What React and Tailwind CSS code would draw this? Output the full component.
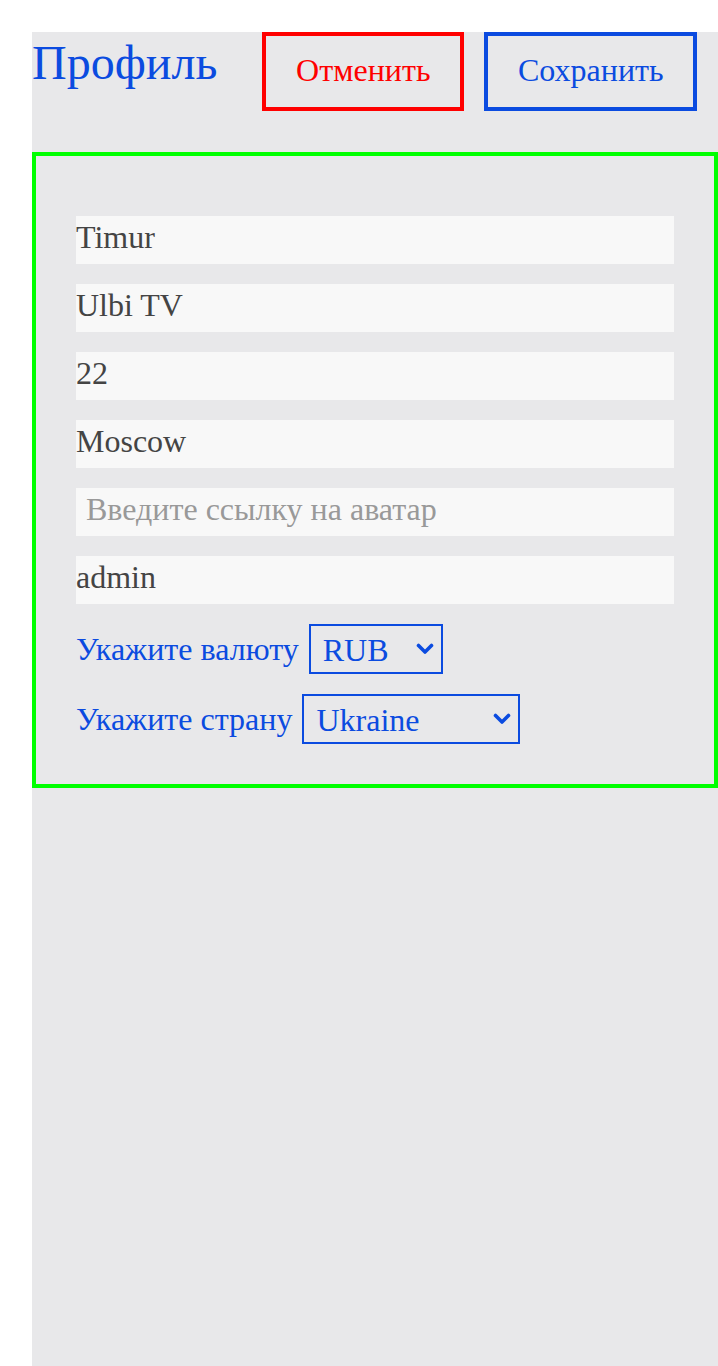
import React, { useState } from 'react';

const blue = 'text-[#0b4be0]';

const fields = [
  { value: 'Timur', placeholder: 'Ваше имя' },
  { value: 'Ulbi TV', placeholder: 'Ваша фамилия' },
  { value: '22', placeholder: 'Ваш возраст' },
  { value: 'Moscow', placeholder: 'Город' },
  { value: '', placeholder: 'Введите ссылку на аватар' },
  { value: 'admin', placeholder: 'Введите имя пользователя' },
];

const Chevron = () => (
  <svg
    className="pointer-events-none absolute right-[9px] top-1/2 -translate-y-1/2"
    width="18"
    height="12"
    viewBox="0 0 18 12"
    fill="none"
  >
    <path d="M2.5 2.5 L9 9 L15.5 2.5" stroke="#0b4be0" strokeWidth="3.6" strokeLinecap="round" strokeLinejoin="round" />
  </svg>
);

const Select = ({ value, onChange, options, width }) => (
  <div className="relative">
    <select
      value={value}
      onChange={onChange}
      className={`h-[50px] ${width} appearance-none border-2 border-[#0b4be0] pl-[12px] text-[32px] outline-none ${blue}`}
    >
      {options.map((o) => (
        <option key={o} value={o}>
          {o}
        </option>
      ))}
    </select>
    <Chevron />
  </div>
);

const App = () => {
  const [currency, setCurrency] = useState('RUB');
  const [country, setCountry] = useState('Ukraine');

  return (
    <div className="min-h-screen bg-white pl-8 pt-8 font-['Liberation_Serif',serif]">
      <div className="min-h-[1334px] bg-[#e8e8ea]">
        {/* шапка */}
        <div className="flex items-start">
          <h1 className={`mt-[7px] text-[48px] leading-none font-normal ${blue}`}>Профиль</h1>
          <button className="ml-[45px] h-[79px] w-[202px] border-4 border-[#ff0000] pb-[3px] text-[32px] text-[#ff0000]">
            Отменить
          </button>
          <button className={`ml-5 h-[79px] w-[213px] border-4 border-[#0b4be0] pb-[3px] text-[32px] ${blue}`}>
            Сохранить
          </button>
        </div>

        {/* карточка профиля */}
        <div className="mt-[41px] flex flex-col gap-5 border-4 border-[#00ff00] px-10 pt-[60px] pb-10">
          {fields.map((f, i) => (
            <input
              key={i}
              readOnly
              value={f.value}
              placeholder={f.placeholder}
              className={`h-12 w-full bg-[#f8f8f8] pb-[6px] text-[32px] text-[#444] outline-none placeholder:text-[#999] ${
                f.value ? '' : 'pl-[10px]'
              }`}
            />
          ))}

          <div className="flex h-[50px] items-center gap-[10px]">
            <span className={`text-[32px] ${blue}`}>Укажите валюту</span>
            <Select
              value={currency}
              onChange={(e) => setCurrency(e.target.value)}
              options={['RUB', 'EUR', 'USD']}
              width="w-[134px]"
            />
          </div>

          <div className="flex h-[50px] items-center gap-[10px]">
            <span className={`text-[32px] ${blue}`}>Укажите страну</span>
            <Select
              value={country}
              onChange={(e) => setCountry(e.target.value)}
              options={['Russia', 'Belarus', 'Ukraine', 'Kazakhstan', 'Armenia']}
              width="w-[218px]"
            />
          </div>
        </div>
      </div>
    </div>
  );
};

export default App;
